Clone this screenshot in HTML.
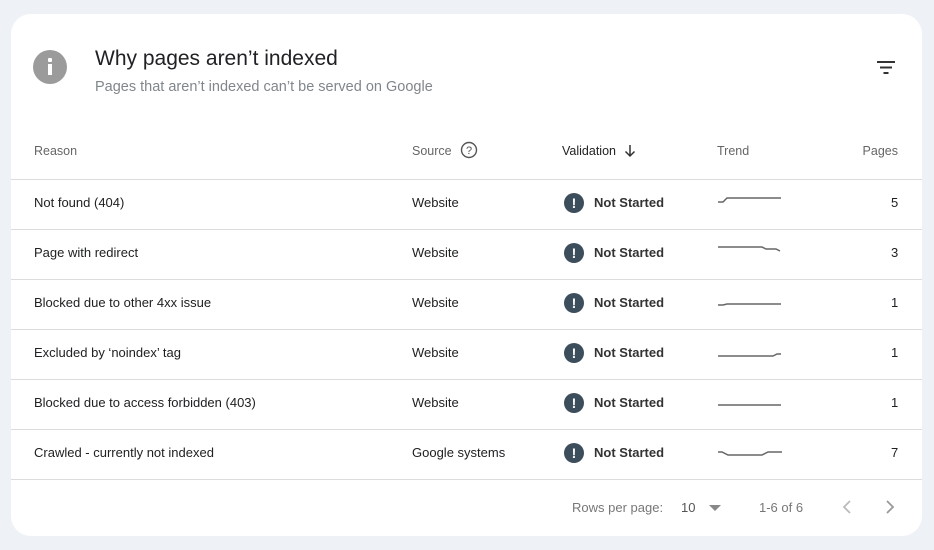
<!DOCTYPE html>
<html><head><style>
*{margin:0;padding:0;box-sizing:border-box}
body{width:934px;height:550px;background:#eef2f7;font-family:"Liberation Sans",Arial,sans-serif;position:relative;overflow:hidden}
.card{position:absolute;left:11px;top:14px;width:911px;height:522px;background:#fff;border-radius:20px}
.a{position:absolute;white-space:nowrap}
.hr{position:absolute;left:0;width:911px;height:1px;background:#dcdcdc}
.t{font-size:13px;color:#202124}
.h{font-size:12.5px;color:#666}
.ex{position:absolute;width:20px;height:20px;border-radius:50%;background:#3c4d5c;color:#fff;font-weight:bold;font-size:14px;text-align:center;line-height:20px}
</style></head><body>
<div class="card">
<div class="a" style="left:22px;top:36px;width:34px;height:34px;border-radius:50%;background:#9b9b9b"><div style="position:absolute;left:15px;top:8px;width:4px;height:4px;background:#fff;border-radius:1px"></div><div style="position:absolute;left:15px;top:14px;width:4px;height:11px;background:#fff"></div></div>
<div class="a" style="left:84px;top:33px;font-size:21px;color:#202124">Why pages aren’t indexed</div>
<div class="a" style="left:84px;top:65px;font-size:14.5px;color:#80868b">Pages that aren’t indexed can’t be served on Google</div>
<svg class="a" style="left:865px;top:46px" width="20" height="16"><path d="M1 2h18M4 7.5h12M7.5 13h5" stroke="#333" stroke-width="2"/></svg>
<div class="a h" style="left:23px;top:130px">Reason</div>
<div class="a h" style="left:401px;top:130px">Source</div>
<svg class="a" style="left:449px;top:127px" width="18" height="18"><circle cx="9" cy="9" r="7.5" fill="none" stroke="#555" stroke-width="1.4"/><text x="9" y="13" text-anchor="middle" font-size="11" fill="#555" font-family="Liberation Sans">?</text></svg>
<div class="a" style="left:551px;top:130px;font-size:12.5px;color:#222">Validation</div>
<svg class="a" style="left:612px;top:130px" width="14" height="14"><path d="M7 1v11M2.5 7.5L7 12l4.5-4.5" stroke="#333" stroke-width="1.5" fill="none"/></svg>
<div class="a h" style="left:706px;top:130px">Trend</div>
<div class="a h" style="right:24px;top:130px">Pages</div>
<div class="hr" style="top:165px"></div>
<div class="hr" style="top:215px"></div>
<div class="hr" style="top:265px"></div>
<div class="hr" style="top:315px"></div>
<div class="hr" style="top:365px"></div>
<div class="hr" style="top:415px"></div>
<div class="hr" style="top:465px"></div>

<div class="a t" style="left:23px;top:181px">Not found (404)</div>
<div class="a t" style="left:23px;top:231px">Page with redirect</div>
<div class="a t" style="left:23px;top:281px">Blocked due to other 4xx issue</div>
<div class="a t" style="left:23px;top:331px">Excluded by ‘noindex’ tag</div>
<div class="a t" style="left:23px;top:381px">Blocked due to access forbidden (403)</div>
<div class="a t" style="left:23px;top:431px">Crawled - currently not indexed</div>

<div class="a t" style="left:401px;top:181px">Website</div>
<div class="a t" style="left:401px;top:231px">Website</div>
<div class="a t" style="left:401px;top:281px">Website</div>
<div class="a t" style="left:401px;top:331px">Website</div>
<div class="a t" style="left:401px;top:381px">Website</div>
<div class="a t" style="left:401px;top:431px">Google systems</div>

<div class="ex" style="left:553px;top:179px">!</div><div class="a t" style="left:583px;top:181px;font-weight:bold;color:#333">Not Started</div>
<div class="ex" style="left:553px;top:229px">!</div><div class="a t" style="left:583px;top:231px;font-weight:bold;color:#333">Not Started</div>
<div class="ex" style="left:553px;top:279px">!</div><div class="a t" style="left:583px;top:281px;font-weight:bold;color:#333">Not Started</div>
<div class="ex" style="left:553px;top:329px">!</div><div class="a t" style="left:583px;top:331px;font-weight:bold;color:#333">Not Started</div>
<div class="ex" style="left:553px;top:379px">!</div><div class="a t" style="left:583px;top:381px;font-weight:bold;color:#333">Not Started</div>
<div class="ex" style="left:553px;top:429px">!</div><div class="a t" style="left:583px;top:431px;font-weight:bold;color:#333">Not Started</div>

<svg class="a" style="left:706px;top:176px" width="66" height="280" fill="none" stroke="#666" stroke-width="1.5">
<path d="M1 12h5l4-4h54"/>
<path d="M1 57h44l4 2h10l4 2"/>
<path d="M1 115h5l4-1h54"/>
<path d="M1 166h55l4-2h4"/>
<path d="M1 215h63"/>
<path d="M1 262h4l6 3h16h18l6-3h14"/>
</svg>

<div class="a t" style="left:880px;top:181px">5</div>
<div class="a t" style="left:880px;top:231px">3</div>
<div class="a t" style="left:880px;top:281px">1</div>
<div class="a t" style="left:880px;top:331px">1</div>
<div class="a t" style="left:880px;top:381px">1</div>
<div class="a t" style="left:880px;top:431px">7</div>

<div class="a" style="left:561px;top:486px;font-size:13px;color:#777">Rows per page:</div>
<div class="a" style="left:670px;top:486px;font-size:13px;color:#555">10</div>
<svg class="a" style="left:698px;top:490px" width="12" height="8"><path d="M0 1h12L6 7z" fill="#888"/></svg>
<div class="a" style="left:748px;top:486px;font-size:13px;color:#777">1-6 of 6</div>
<svg class="a" style="left:830px;top:485px" width="12" height="16"><path d="M9 2L3 8l6 6" stroke="#bbb" stroke-width="1.8" fill="none"/></svg>
<svg class="a" style="left:873px;top:485px" width="12" height="16"><path d="M3 2l6 6-6 6" stroke="#999" stroke-width="1.8" fill="none"/></svg>
</div>
</body></html>
